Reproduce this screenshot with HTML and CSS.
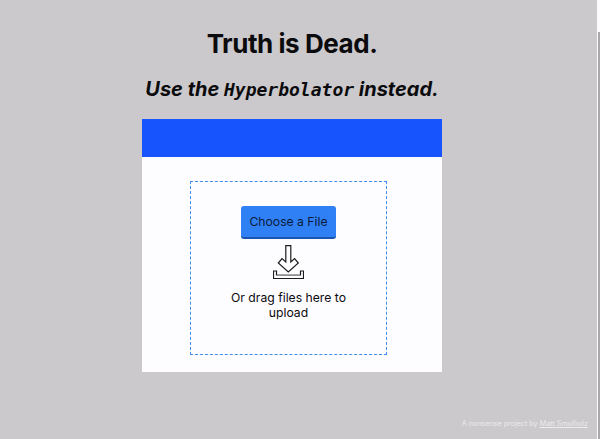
FILE: index.html
```html
<!DOCTYPE html>
<html lang="en">
<head>
    <meta charset="UTF-8">
    <meta name="viewport" content="width=device-width, initial-scale=1.0">
    <title>Hyperbolator</title>
    <link rel="stylesheet" href="styles.css">
</head>
<body>
    <main class="page">
        <h1 class="title">Truth is Dead.</h1>
        <h2 class="subtitle">Use the <code class="product">Hyperbolator</code> instead.</h2>
        <section class="card">
            <div class="card-header"></div>
            <div class="card-body">
                <div class="dropzone">
                    <button class="choose-btn" type="button">Choose a File</button>
                    <svg class="drop-icon" width="31" height="34" viewBox="0 0 31 34" fill="#fff" stroke="#1c1c1e" stroke-width="1.2">
                        <path d="M.5 26v7.500h30v-7.500h-3v4h-24v-4z"/>
                        <path d="M4 29.600h23" stroke="#a9a9ae" stroke-width="1"/>
                        <path d="M12.800.7h5V17l3.800-3.500 3.700 4.500-10 9-10-9L9 13.500l3.800 3.500z"/>
                    </svg>
                    <p class="drop-text">Or drag files here to upload</p>
                </div>
            </div>
        </section>
        <footer class="credit">A nonsense project by <a href="#">Matt Smolholz</a></footer>
    </main>
    <div class="scroll-edge"><div class="scroll-thumb"></div></div>
</body>
</html>
```

FILE: styles.css
```css
/* Page */
html, body {
    height: 100%;
}

body {
    margin: 0;
    background-color: #cbc9cc;
    color: #0b0b0d;
    font-family: 'Inter', sans-serif;
    overflow: hidden;
}

.page {
    display: flex;
    flex-direction: column;
    align-items: center;
    height: 439px;
    box-sizing: border-box;
    padding-top: 28px;
    padding-right: 16px;
    position: relative;
}

.title {
    margin: 0;
    font-size: 26px;
    line-height: 32px;
    font-weight: 700;
    letter-spacing: -0.45px;
}

.subtitle {
    margin: 13px 0 0;
    font-size: 20px;
    line-height: 32px;
    font-weight: 700;
    font-style: italic;
}

.product {
    font-family: 'DejaVu Sans Mono', monospace;
    font-size: 18px;
    font-style: italic;
}

/* Upload card */
.card {
    width: 300px;
    height: 253px;
    margin-top: 13px;
    background-color: #fdfcfe;
    display: flex;
    flex-direction: column;
}

.card-header {
    height: 38px;
    background-color: #1854fd;
}

.card-body {
    flex: 1;
    display: flex;
    justify-content: center;
    padding-top: 24px;
    padding-right: 7px;
}

.dropzone {
    width: 197px;
    height: 174px;
    box-sizing: border-box;
    border: 1px dashed #3f8cec;
    display: flex;
    flex-direction: column;
    align-items: center;
    padding-top: 24px;
}

.choose-btn {
    width: 95px;
    height: 33px;
    padding: 0;
    border: none;
    border-bottom: 2px solid #1a55b0;
    border-radius: 3px;
    background-color: #2f80f5;
    color: #0b1a3a;
    font-family: 'Inter', sans-serif;
    font-size: 12.200px;
}

.drop-icon {
    margin-top: 6px;
}

.drop-text {
    width: 150px;
    margin: 11px 0 0;
    font-size: 12.200px;
    line-height: 15px;
    text-align: center;
}

/* Footer */
.credit {
    position: absolute;
    right: 12px;
    bottom: 11px;
    font-size: 7.200px;
    color: #ecebed;
}

.credit a {
    color: inherit;
}

/* Scrollbar strip on the right edge */
.scroll-edge {
    position: fixed;
    top: 0;
    right: 0;
    bottom: 0;
    width: 3px;
    background-color: #fbfbfc;
}

.scroll-thumb {
    margin-top: 32px;
    margin-left: 1px;
    height: 407px;
    background-color: #a9a9a9;
}
```
